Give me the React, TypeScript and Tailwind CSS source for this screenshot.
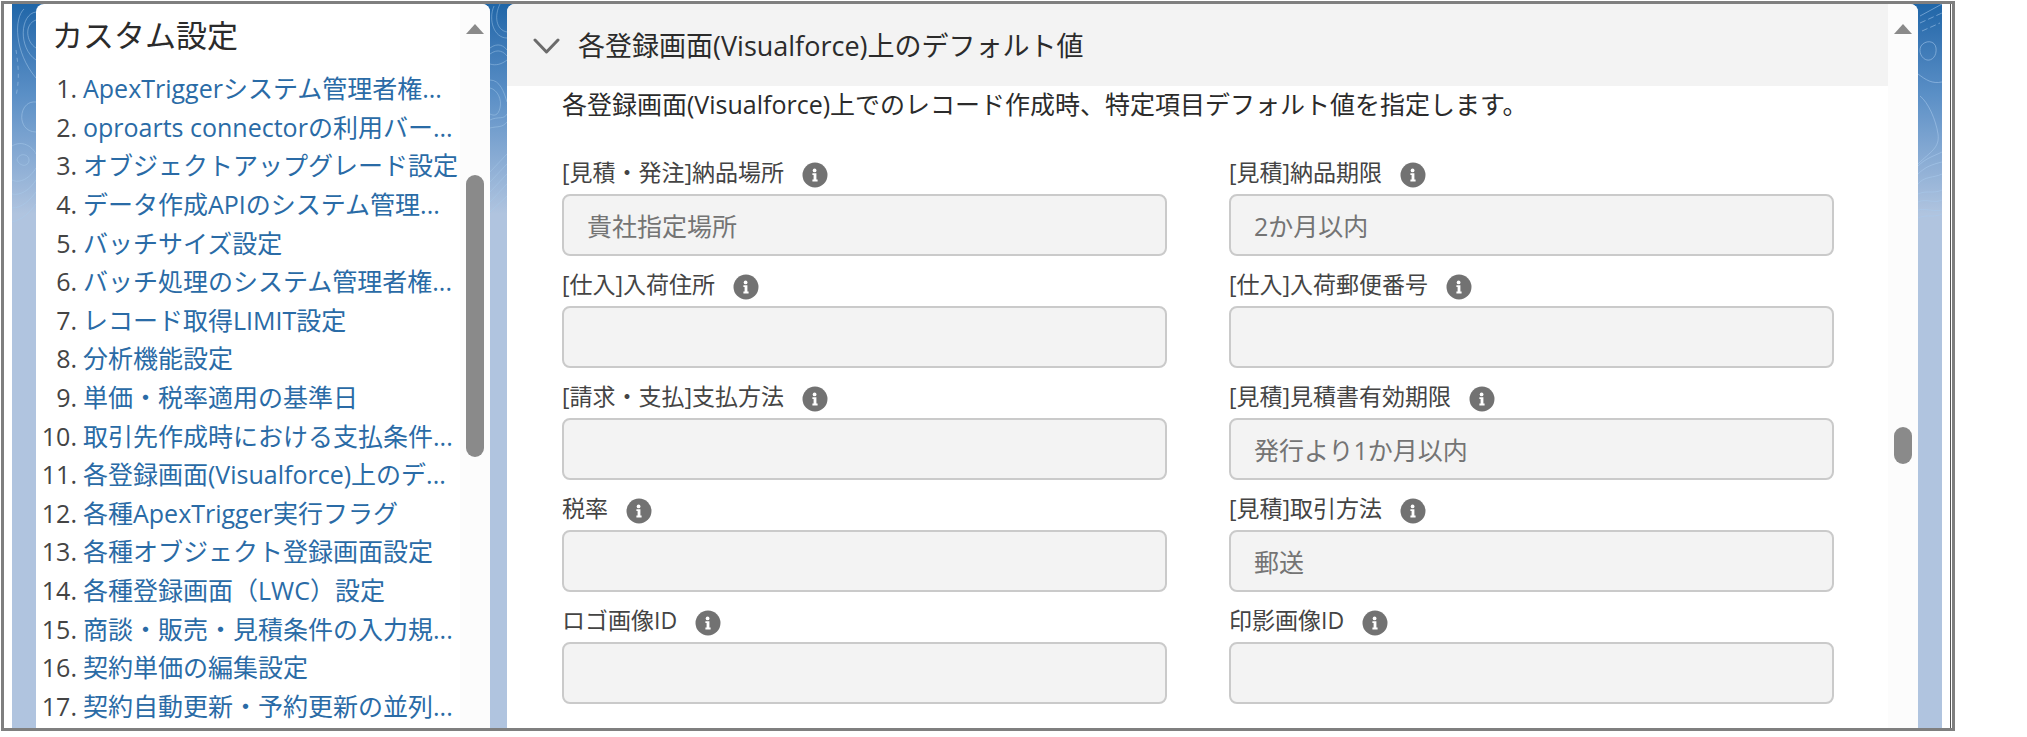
import { useState } from "react";

const menuItems = [
	"ApexTriggerシステム管理者権...",
	"oproarts connectorの利用バー...",
	"オブジェクトアップグレード設定",
	"データ作成APIのシステム管理...",
	"バッチサイズ設定",
	"バッチ処理のシステム管理者権...",
	"レコード取得LIMIT設定",
	"分析機能設定",
	"単価・税率適用の基準日",
	"取引先作成時における支払条件...",
	"各登録画面(Visualforce)上のデ...",
	"各種ApexTrigger実行フラグ",
	"各種オブジェクト登録画面設定",
	"各種登録画面（LWC）設定",
	"商談・販売・見積条件の入力規...",
	"契約単価の編集設定",
	"契約自動更新・予約更新の並列...",
];

const fields = [
	{ id: "deliveryPlace", label: "[見積・発注]納品場所", value: "貴社指定場所" },
	{ id: "deliveryLimit", label: "[見積]納品期限", value: "2か月以内" },
	{ id: "arrivalAddress", label: "[仕入]入荷住所", value: "" },
	{ id: "arrivalZip", label: "[仕入]入荷郵便番号", value: "" },
	{ id: "paymentMethod", label: "[請求・支払]支払方法", value: "" },
	{ id: "quoteExpiry", label: "[見積]見積書有効期限", value: "発行より1か月以内" },
	{ id: "taxRate", label: "税率", value: "" },
	{ id: "dealMethod", label: "[見積]取引方法", value: "郵送" },
	{ id: "logoImageId", label: "ロゴ画像ID", value: "" },
	{ id: "sealImageId", label: "印影画像ID", value: "" },
];

function InfoIcon() {
	return (
		<svg viewBox="0 0 26 26" className="size-[26px]" aria-hidden="true">
			<circle cx="13" cy="13" r="12.5" fill="#727272" />
			<circle cx="12.6" cy="8.4" r="1.9" fill="#fff" />
			<path d="M10.4 11.2h4v6.4h1.2v1.8h-5.2v-1.8h1.2v-4.6h-1.2z" fill="#fff" />
		</svg>
	);
}

function ScrollArrow() {
	return (
		<svg viewBox="0 0 18 10" className="mt-5 h-2.5 w-[18px]" aria-hidden="true">
			<path d="M9 0l9 10H0z" fill="#8a8a8a" />
		</svg>
	);
}

export default function App() {
	const [open, setOpen] = useState(true);

	return (
		<div className="h-screen bg-white pt-px pr-[72px] pb-1.5 pl-px font-['Open_Sans','Noto_Sans_CJK_JP',sans-serif]">
			<div className="h-full border-3 border-[#7f7f7f] pr-px">
				<div className="h-full border-r border-[#555] px-2">
					<div className="relative flex h-full gap-[17px] overflow-hidden bg-linear-to-b from-[#1f66a8] via-[#5a8fc6] via-[90px] to-[#b0c4df] to-[210px] px-6">
						<Contours />

						<aside className="relative flex w-[454px] shrink-0 rounded-t-lg bg-white">
							<nav className="flex min-w-0 flex-1 flex-col pb-[3px]">
								<h2 className="mt-2 mb-[11px] pl-4 text-[31px] leading-[46px] text-[#2b2b2b]">カスタム設定</h2>
								<ol className="grid flex-1 auto-rows-fr items-center text-[25px] leading-8">
									{menuItems.map((item, i) => (
										<li key={item} className="flex gap-1.5 whitespace-nowrap">
											<span className="w-[41px] shrink-0 text-right text-[#444]">{i + 1}.</span>
											<a href="#" className="text-[#2a6ba6]">
												{item}
											</a>
										</li>
									))}
								</ol>
							</nav>
							<div className="flex w-[30px] shrink-0 flex-col items-center rounded-tr-lg bg-[#fcfcfc]">
								<ScrollArrow />
								<div className="mt-[141px] h-[282px] w-[18px] rounded-full bg-[#8a8a8a]" />
							</div>
						</aside>

						<main className="relative flex min-w-0 flex-1 rounded-t-lg bg-white">
							<div className="min-w-0 flex-1">
								<button
									type="button"
									onClick={() => setOpen(!open)}
									className="flex h-[82px] w-full items-center gap-[18px] rounded-tl-lg bg-[#f3f3f3] pt-0.5 pl-[26px] text-[27px] text-[#2b2b2b]"
								>
									<svg viewBox="0 0 27 16" className="h-4 w-[27px]" fill="none" aria-hidden="true">
										<path d="M2 2l11.5 12L25 2" stroke="#6b6b6b" strokeWidth="3" strokeLinecap="round" strokeLinejoin="round" />
									</svg>
									各登録画面(Visualforce)上のデフォルト値
								</button>

								{open && (
									<div className="pr-[54px] pl-[55px]">
										<p className="text-[25px] leading-9 text-[#2b2b2b]">
											各登録画面(Visualforce)上でのレコード作成時、特定項目デフォルト値を指定します。
										</p>
										<form className="mt-[34px] grid grid-cols-2 gap-x-[62px] gap-y-3">
											{fields.map((field) => (
												<div key={field.id}>
													<div className="mb-1.5 flex h-8 items-end gap-[18px]">
														<label htmlFor={field.id} className="text-[23px] leading-8 text-[#444]">
															{field.label}
														</label>
														<InfoIcon />
													</div>
													<input
														id={field.id}
														type="text"
														readOnly
														defaultValue={field.value}
														className="h-[62px] w-full rounded-lg border-2 border-[#cacaca] bg-[#f3f3f3] px-[23px] text-[25px] text-[#747474] outline-none"
													/>
												</div>
											))}
										</form>
									</div>
								)}
							</div>
							<div className="flex w-[30px] shrink-0 flex-col items-center rounded-tr-lg bg-[#fcfcfc]">
								<ScrollArrow />
								<div className="mt-[393px] h-[37px] w-[18px] rounded-full bg-[#8a8a8a]" />
							</div>
						</main>
					</div>
				</div>
			</div>
		</div>
	);
}

// topographic lines of the page background, seen between the panels
function Contours() {
	return (
		<>
			<svg viewBox="0 0 24 230" className="absolute top-0 left-0 h-[230px] w-6" fill="none" stroke="#a9cbec" strokeOpacity="0.5" aria-hidden="true">
				<path d="M12 5C2 14 2 48 24 74" />
				<path d="M24 8C8 10 6 44 24 56" />
				<path d="M24 16C12 20 14 38 24 44" />
				<path d="M4 46c2 14 4 28 0 46" strokeDasharray="4 4" />
				<path d="M24 98C6 96 4 128 24 128" />
				<path d="M0 142c10-6 20 0 24 8" />
				<path d="M5 156c2-8 12-6 12 0s-8 8-12 0z" />
				<path d="M0 176c8 4 18-2 24-12M0 190c8 2 18-4 24-14M0 204c10 0 18-8 24-16M0 218c10-2 18-10 24-18" />
			</svg>
			<svg viewBox="0 0 17 230" className="absolute top-0 left-[478px] h-[230px] w-[17px]" fill="none" stroke="#a9cbec" strokeOpacity="0.45" aria-hidden="true">
				<path d="M4 2c-6 14 0 32 13 32" />
				<path d="M10 0c-6 12-4 26 7 28" />
				<path d="M0 44c8-6 14-2 17 2M0 50c8-6 14-2 17 2M0 60c6 2 12 0 17-4" />
				<path d="M0 76c10 0 14 12 17 22M0 84c8 2 12 12 10 20s-6 8-10 6" />
				<path d="M0 116c8-4 14 0 17-6M0 124c8-2 12 0 17-6" />
				<path d="M0 168l17-18M0 178l17-18M0 188l17-18M0 198l17-18M0 208l17-16" />
			</svg>
			<svg viewBox="0 0 24 230" className="absolute top-0 right-0 h-[230px] w-6" fill="none" stroke="#a9cbec" strokeOpacity="0.55" aria-hidden="true">
				<path d="M2 12L24 0" />
				<path d="M2 19l22-10M4 27l18-8" strokeDasharray="6 3" />
				<path d="M3 42c4-6 14-6 15 2s-4 13-9 12-9-8-6-14z" />
				<path d="M0 70c8 6 14 10 24 8" />
				<path d="M2 92c8 6 16 24 18 38s-8 18-20 30" />
				<path d="M0 162c8-8 16-10 24-14M0 170c8-8 16-10 24-12M0 180c6-8 16-6 24-10" />
				<path d="M0 190c8-4 16 0 24-4M0 198c8-4 16 2 24-2M0 206c8-2 16 2 24 0M0 214c8-4 16 0 24-4" />
			</svg>
		</>
	);
}
